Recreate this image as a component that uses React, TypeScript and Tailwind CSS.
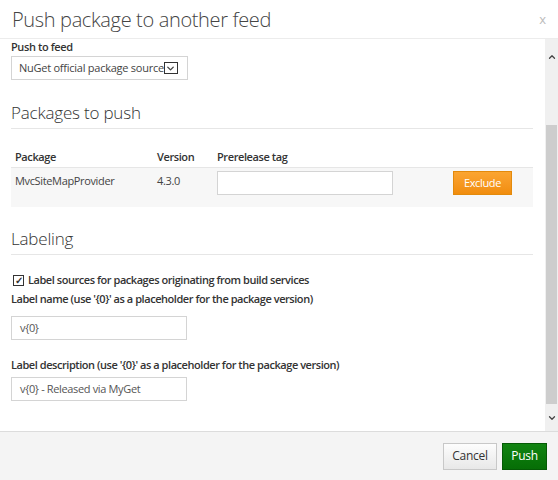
import { ChevronDown, ChevronUp } from "lucide-react";

const font = { fontFamily: '"Open Sans", "Noto Sans", sans-serif' };

const SectionTitle = ({ children }: { children: string }) => (
  <div className="border-b border-[#e6e6e6] pb-[2px] text-[17px] font-light leading-[26px] tracking-[-0.2px] text-[#333]">
    {children}
  </div>
);

type FieldProps = { label: string; value: string; gap: string };

const Field = ({ label, value, gap }: FieldProps) => (
  <div>
    <div className="text-[11px] font-semibold leading-[16px] tracking-[-0.45px] text-[#333]">{label}</div>
    <div className={`${gap} flex h-[24px] w-[176px] items-center border border-[#d4d4d4] bg-white px-[8px] text-[11px] tracking-[-0.35px] text-[#555]`}>
      {value}
    </div>
  </div>
);

export default function App() {
  return (
    <div className="flex h-[480px] w-[558px] flex-col bg-white" style={font}>
      <div className="flex h-[39px] shrink-0 items-center justify-between border-b border-[#ececec] pl-[12px] pr-[12px]">
        <h1 className="pt-[2px] text-[20px] font-light tracking-[-0.35px] text-[#444]">Push package to another feed</h1>
        <span className="pt-[2px] text-[13px] text-[#bbb]">x</span>
      </div>

      <div className="flex min-h-0 flex-1">
        <div className="flex-1 pl-[11px] pr-[12px]">
          <div className="pt-[1px] text-[11px] font-semibold leading-[14px] tracking-[-0.4px] text-[#333]">Push to feed</div>
          <div className="mt-[2px] flex h-[24px] w-[177px] items-center border border-[#d4d4d4] bg-white pl-[7px] text-[11px] text-[#444]">
            <span className="whitespace-nowrap tracking-[-0.25px]">NuGet official package source</span>
            <span className="flex h-[12px] w-[14px] items-center justify-center border border-[#333] bg-white">
              <ChevronDown className="h-[11px] w-[11px]" strokeWidth={3} />
            </span>
          </div>

          <div className="mt-[20px]">
            <SectionTitle>Packages to push</SectionTitle>
          </div>

          <div className="mt-[20px] grid grid-cols-[142px_60px_1fr] border-b border-[#e6e6e6] pb-[2px] pl-[4px] text-[11px] font-semibold leading-[16px] tracking-[-0.4px] text-[#333]">
            <span>Package</span>
            <span>Version</span>
            <span>Prerelease tag</span>
          </div>
          <div className="grid h-[39px] grid-cols-[142px_60px_176px_1fr] items-start bg-[#f7f7f7] pl-[4px] pt-[3px] text-[11px] tracking-[-0.35px] text-[#444]">
            <span className="pt-[2px]">MvcSiteMapProvider</span>
            <span className="pt-[2px]">4.3.0</span>
            <div className="h-[24px] w-[176px] border border-[#d4d4d4] bg-white" />
            <div className="flex justify-end pr-[21px]">
              <button className="h-[24px] w-[59px] border border-[#e38a0c] bg-gradient-to-b from-[#fba531] to-[#f18d0c] text-[11px] text-white">
                Exclude
              </button>
            </div>
          </div>

          <div className="mt-[19px]">
            <SectionTitle>Labeling</SectionTitle>
          </div>

          <div className="mt-[18px] flex items-center gap-[4px] pl-[2px] text-[11px] font-semibold leading-[14px] tracking-[-0.45px] text-[#333]">
            <span className="flex h-[11px] w-[11px] items-center justify-center border border-[#333] text-[10px] font-bold leading-none">✓</span>
            <span>Label sources for packages originating from build services</span>
          </div>

          <div className="mt-[4px] flex flex-col gap-[17px]">
            <Field gap="mt-[9px]" label="Label name (use '{0}' as a placeholder for the package version)" value="v{0}" />
            <Field gap="mt-[4px]" label="Label description (use '{0}' as a placeholder for the package version)" value="v{0} - Released via MyGet" />
          </div>
        </div>

        <div className="flex w-[13px] shrink-0 flex-col bg-[#f0f0f0]">
          <div className="flex h-[86px] items-start justify-center pt-[13px] text-[#444]">
            <ChevronUp className="h-[10px] w-[10px]" strokeWidth={3} />
          </div>
          <div className="mx-[1px] h-[279px] bg-[#cdcdcd]" />
          <div className="flex flex-1 items-center justify-center text-[#444]">
            <ChevronDown className="h-[10px] w-[10px]" strokeWidth={3} />
          </div>
        </div>
      </div>

      <div className="flex h-[49px] shrink-0 items-center justify-end gap-[5px] border-t border-[#dcdcdc] bg-[#f4f4f4] pr-[11px]">
        <button className="h-[27px] w-[54px] border border-[#c8c8c8] bg-gradient-to-b from-[#fdfdfd] to-[#e8e8e8] text-[12px] tracking-[-0.3px] text-[#333]">
          Cancel
        </button>
        <button className="h-[27px] w-[45px] border border-[#055a05] bg-gradient-to-b from-[#118411] to-[#066e06] text-[12px] tracking-[-0.3px] text-white">
          Push
        </button>
      </div>
    </div>
  );
}
